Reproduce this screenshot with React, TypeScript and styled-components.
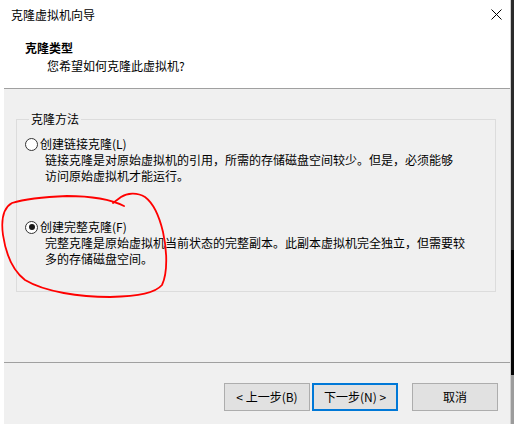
import React from "react";
import styled, { createGlobalStyle } from "styled-components";

const GlobalStyle = createGlobalStyle`
  html, body { margin: 0; padding: 0; background: #fff; }
  body {
    font-family: "Noto Sans CJK SC", "Microsoft YaHei", sans-serif;
    font-size: 12px;
    color: #000;
  }
  * { box-sizing: border-box; }
`;

const Screen = styled.div`
  display: flex;
  width: 514px;
  height: 424px;
  overflow: hidden;
`;

const Window = styled.div`
  position: relative;
  display: flex;
  flex-direction: column;
  width: 511px;
  height: 424px;
  background: #fff;
  border-right: 1px solid #cfcfcf;
`;

const Backdrop = styled.div`
  display: flex;
  flex-direction: column;
  width: 3px;
`;

const BackdropBand = styled.div<{ $h: number; $c: string }>`
  height: ${(p) => p.$h}px;
  flex: ${(p) => (p.$h === 0 ? 1 : "none")};
  background: ${(p) => p.$c};
`;

const TitleBar = styled.div`
  display: flex;
  align-items: center;
  justify-content: space-between;
  height: 30px;
  padding-left: 11px;
`;

const TitleText = styled.span`
  line-height: 16px;
`;

const CloseButton = styled.div`
  display: flex;
  align-items: center;
  justify-content: center;
  width: 28px;
  height: 28px;
  margin-top: -2px;
`;

const Body = styled.div`
  flex: 1;
  display: flex;
  flex-direction: column;
  margin-left: 4px;
`;

const Header = styled.div`
  height: 59px;
  padding: 10px 0 0 21px;
  border-bottom: 1px solid #a0a0a0;
`;

const HeaderTitle = styled.div`
  font-weight: bold;
  line-height: 16px;
`;

const HeaderSubtitle = styled.div`
  margin-top: 2px;
  padding-left: 22px;
  line-height: 16px;
`;

const Main = styled.div`
  flex: 1;
  display: flex;
  flex-direction: column;
  background: #f0f0f0;
`;

const Group = styled.fieldset`
  margin: 22px 14px 0 12px;
  padding: 9px 0 24px 8px;
  border: 1px solid #dcdcdc;
  min-width: 0;
`;

const Legend = styled.legend`
  margin-left: 4px;
  padding: 0 2px;
  line-height: 16px;
`;

const Option = styled.div<{ $gap: number }>`
  margin-top: ${(p) => p.$gap}px;
`;

const OptionRow = styled.label`
  display: flex;
  align-items: center;
  gap: 2px;
  line-height: 16px;
`;

const Radio = styled.input`
  appearance: none;
  margin: 0;
  width: 13px;
  height: 13px;
  border: 1px solid #333;
  border-radius: 50%;
  background: #fff;
  display: grid;
  place-items: center;
  &:checked::after {
    content: "";
    width: 6px;
    height: 6px;
    border-radius: 50%;
    background: #1a1a1a;
  }
`;

const Description = styled.div`
  margin-left: 20px;
  line-height: 16px;
  white-space: nowrap;
`;

const Footer = styled.div`
  display: flex;
  justify-content: flex-end;
  align-items: flex-start;
  margin-top: auto;
  height: 62px;
  padding: 20px 12px 0 0;
  border-top: 1px solid #a0a0a0;
`;

const Button = styled.button<{ $primary?: boolean; $spaced?: boolean }>`
  width: 86px;
  height: 28px;
  margin: 0 0 0 ${(p) => (p.$spaced ? 14 : 2)}px;
  padding: 0;
  font-family: inherit;
  font-size: 12px;
  line-height: 16px;
  color: #000;
  background: #e1e1e1;
  border: ${(p) => (p.$primary ? "2px solid #0078d7" : "1px solid #adadad")};
  &:first-child { margin-left: 0; }
`;

const Annotation = styled.svg`
  position: absolute;
  left: 0;
  top: 0;
  width: 511px;
  height: 424px;
  pointer-events: none;
`;

export default function App() {
  return (
    <>
      <GlobalStyle />
      <Screen>
        <Window>
          <TitleBar>
            <TitleText>克隆虚拟机向导</TitleText>
            <CloseButton>
              <svg width="11" height="11" viewBox="0 0 11 11">
                <path d="M0.5 0.5 L10.5 10.5 M10.5 0.5 L0.5 10.5" stroke="#000" strokeWidth="1" fill="none" />
              </svg>
            </CloseButton>
          </TitleBar>
          <Body>
            <Header>
              <HeaderTitle>克隆类型</HeaderTitle>
              <HeaderSubtitle>您希望如何克隆此虚拟机?</HeaderSubtitle>
            </Header>
            <Main>
              <Group>
                <Legend>克隆方法</Legend>
                <Option $gap={0}>
                  <OptionRow>
                    <Radio type="radio" name="clone" readOnly />
                    <span>创建链接克隆(L)</span>
                  </OptionRow>
                  <Description>
                    链接克隆是对原始虚拟机的引用，所需的存储磁盘空间较少。但是，必须能够
                    <br />
                    访问原始虚拟机才能运行。
                  </Description>
                </Option>
                <Option $gap={35}>
                  <OptionRow>
                    <Radio type="radio" name="clone" checked readOnly />
                    <span>创建完整克隆(F)</span>
                  </OptionRow>
                  <Description>
                    完整克隆是原始虚拟机当前状态的完整副本。此副本虚拟机完全独立，但需要较
                    <br />
                    多的存储磁盘空间。
                  </Description>
                </Option>
              </Group>
              <Footer>
                <Button>&lt; 上一步(B)</Button>
                <Button $primary>下一步(N) &gt;</Button>
                <Button $spaced>取消</Button>
              </Footer>
            </Main>
          </Body>
          <Annotation viewBox="0 0 511 424">
            <path
              d="M124,206 C110,199 90,196 67,196 C45,197 25,199 12,203 C3,208 1,220 3,235 C6,255 12,270 25,280 C45,292 80,297 110,297 C140,296 155,293 162,285 C168,272 167,250 163,232 C159,215 153,203 145,197 C137,192 127,193 121,197 L113,203"
              stroke="#ff0000"
              strokeWidth="1.8"
              fill="none"
              strokeLinecap="round"
              strokeLinejoin="round"
            />
          </Annotation>
        </Window>
        <Backdrop>
          <BackdropBand $h={250} $c="#2b2b2b" />
          <BackdropBand $h={125} $c="#050505" />
          <BackdropBand $h={0} $c="#9c9c9c" />
        </Backdrop>
      </Screen>
    </>
  );
}
